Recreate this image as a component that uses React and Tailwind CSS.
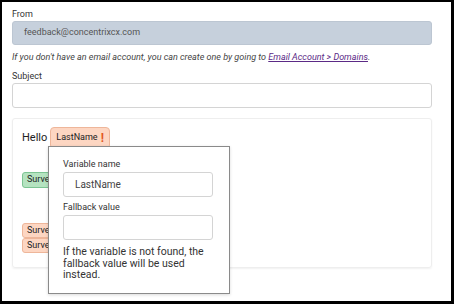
export default function App() {
  const font = { fontFamily: "Roboto, 'Liberation Sans', sans-serif" };

  return (
    <div className="w-[454px] h-[304px] bg-black pt-[2px] pl-[2px] pr-[3px] pb-[3px]" style={font}>
      <div className="w-full h-full bg-white px-[10px] pt-[7px] overflow-hidden">
        {/* From */}
        <div className="text-[9px] leading-[11px] text-[#333]">From</div>
        <div className="mt-[1px] h-[24px] w-[420px] rounded-[3px] bg-[#c6d0dc] border border-[#bcc6d2] flex items-center px-[11px] text-[9px] text-[#555]">
          feedback@concentrixcx.com
        </div>
        <p className="mt-[7px] text-[9px] leading-[11px] italic text-[#444]">
          If you don't have an email account, you can create one by going to{" "}
          <a className="underline text-[#5b2a86]">Email Account &gt; Domains</a>.
        </p>

        {/* Subject */}
        <div className="mt-[8px] text-[9px] leading-[11px] text-[#333]">Subject</div>
        <div className="mt-[1px] h-[25px] w-[420px] rounded-[3px] border border-[#d4d4d4] bg-white" />

        {/* Editor card */}
        <div className="relative mt-[10px] h-[150px] w-[420px] rounded-[3px] border border-[#eeeeee] shadow-[0_1px_2px_rgba(0,0,0,0.06)] px-[9px] pt-[8px]">
          <div className="flex items-center gap-[3px] h-[22px]">
            <span className="text-[11px] text-[#222]">Hello</span>
            <span className="inline-flex items-center h-[22px] px-[5px] rounded-[4px] bg-[#fdd6c2] border border-[#eeb69a] text-[9px] text-[#222]">
              LastName
              <span className="ml-[3px] text-[12px] font-bold text-[#e2561f]">!</span>
            </span>
          </div>

          <div className="mt-[23px] inline-flex items-center h-[16px] px-[4px] rounded-[3px] bg-[#b5e3c0] border border-[#7cc493] text-[9px] text-[#222]">
            Survey link
          </div>

          <div className="mt-[34px] flex flex-col items-start">
            <span className="inline-flex items-center h-[15px] px-[4px] rounded-[3px] bg-[#fdd6c2] border border-[#eeb69a] text-[9px] text-[#222]">
              Survey link
            </span>
            <span className="inline-flex items-center h-[15px] px-[4px] rounded-[3px] bg-[#fdd6c2] border border-[#eeb69a] text-[9px] text-[#222]">
              Survey link
            </span>
          </div>

          {/* Variable popover */}
          <div className="absolute z-10 left-[35px] top-[27px] w-[182px] h-[148px] bg-white border border-[#8a8a8a] shadow-[0_1px_3px_rgba(0,0,0,0.15)] px-[14px] pt-[12px]">
            <div className="text-[9px] leading-[11px] text-[#333]">Variable name</div>
            <div className="mt-[2px] h-[25px] w-[150px] rounded-[3px] border border-[#d4d4d4] flex items-center px-[11px] text-[10px] text-[#444]">
              LastName
            </div>
            <div className="mt-[5px] text-[9px] leading-[11px] text-[#333]">Fallback value</div>
            <div className="mt-[2px] h-[25px] w-[150px] rounded-[3px] border border-[#d4d4d4]" />
            <p className="mt-[6px] text-[10.5px] leading-[11.5px] text-[#333]">
              If the variable is not found, the fallback value will be used instead.
            </p>
          </div>
        </div>
      </div>
    </div>
  );
}
